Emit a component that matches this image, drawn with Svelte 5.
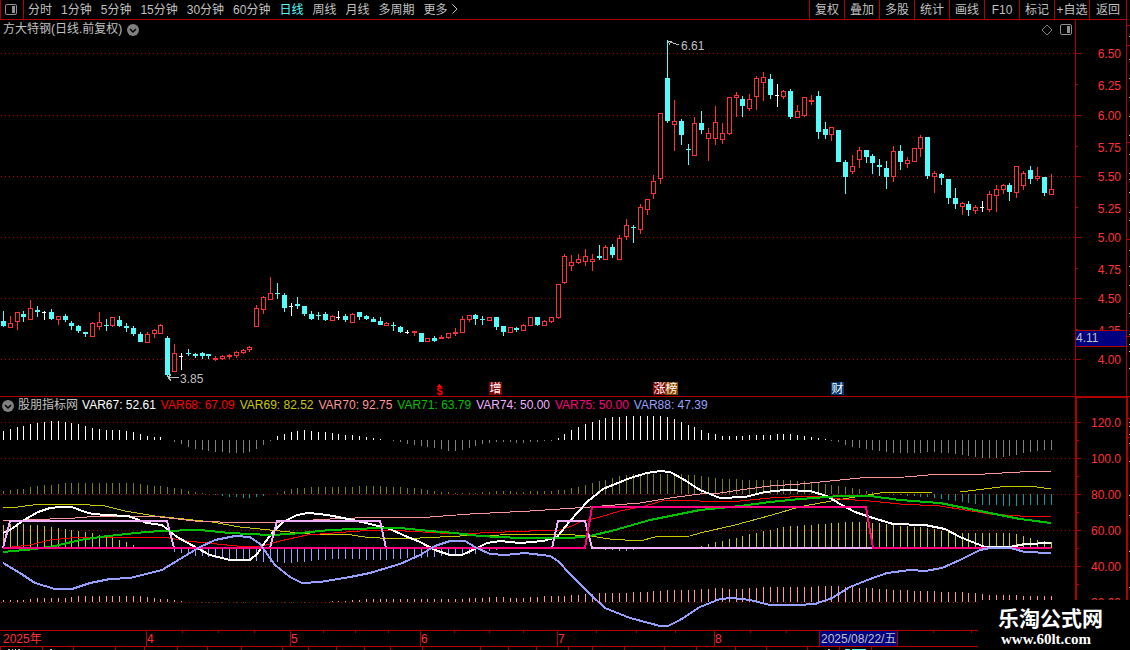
<script lang="ts">
  const periods = ["分时", "1分钟", "5分钟", "15分钟", "30分钟", "60分钟", "日线", "周线", "月线", "多周期", "更多"];
  const tools = ["复权", "叠加", "多股", "统计", "画线", "F10", "标记", "+自选", "返回"];

  let active = $state("日线");

  const legend = [
    { name: "VAR67", value: "52.61", tone: "white" },
    { name: "VAR68", value: "67.09", tone: "red" },
    { name: "VAR69", value: "82.52", tone: "yellow" },
    { name: "VAR70", value: "92.75", tone: "pink" },
    { name: "VAR71", value: "63.79", tone: "green" },
    { name: "VAR74", value: "50.00", tone: "violet" },
    { name: "VAR75", value: "50.00", tone: "magenta" },
    { name: "VAR88", value: "47.39", tone: "blue" }
  ];

  // kind, high, body top, body bottom, low
  // r = hollow up, f = flat up, c = down, w = unchanged
  const raw = `c 311 321 326 327|r 316 323 328 328|r 312 312 322 330|c 311 314 317 322|r 300 308 320 320|c 306 310 312 317|w 311 312 313 320|c 309 312 319 320|r 316 316 320 325|c 314 316 320 322
|c 321 323 326 330|c 325 326 331 333|c 332 332 334 337|r 322 323 337 337|r 312 322 327 330|c 319 325 326 331|r 317 317 326 327|c 316 320 326 327|c 323 326 328 332|c 326 328 334 336
|c 332 334 342 342|r 332 334 343 343|r 329 330 334 338|r 324 325 334 334|c 336 338 375 377|r 344 353 372 372|w 353 356 357 370|c 349 353 354 356|c 353 354 356 358|c 352 353 356 359
|c 354 354 356 359|f 356 358 360 361|r 355 356 359 360|f 354 355 357 359|r 351 352 356 358|r 349 350 353 354|r 346 347 350 352|r 305 308 327 327|r 296 297 310 314|r 277 293 300 300
|c 283 293 294 299|c 293 295 308 312|w 303 306 307 316|c 297 304 306 309|c 306 306 314 316|c 311 314 319 320|c 312 315 316 320|c 312 314 320 321|r 315 316 321 321|w 311 317 318 320
|c 314 316 320 322|r 313 314 323 323|c 312 312 317 320|c 315 316 319 320|c 317 319 322 322|c 317 321 325 325|r 322 323 326 326|c 322 325 326 331|c 326 327 332 333|w 330 332 333 334
|f 331 331 333 336|c 333 333 342 342|r 338 338 342 342|c 336 338 341 342|f 335 337 339 339|r 333 333 338 339|f 328 332 334 336|r 316 319 333 333|r 315 315 320 322|c 314 315 319 325
|c 316 319 320 325|r 317 317 321 321|c 317 317 327 330|c 326 326 332 336|r 327 327 333 333|c 327 328 330 332|r 324 325 331 331|r 317 317 326 326|c 317 317 325 326|r 320 321 326 326
|r 317 317 322 323|r 284 284 318 319|r 254 256 283 284|r 255 262 266 271|r 254 259 263 264|r 249 256 262 266|r 254 259 262 271|c 245 256 258 260|r 245 247 260 260|c 244 247 255 258
|r 235 238 260 260|r 219 225 237 240|c 225 227 228 243|r 204 207 230 234|r 199 199 210 215|r 175 181 194 199|r 113 113 179 184|c 40 78 121 123|r 100 121 125 151|c 119 121 135 145
|c 144 149 150 165|r 117 123 156 156|c 111 123 130 134|r 128 133 139 161|r 106 122 139 145|r 123 133 140 144|r 97 97 134 135|r 92 95 98 117|c 96 99 106 117|r 94 99 109 111
|r 76 78 97 110|r 72 77 83 101|c 74 79 95 99|w 84 95 96 107|r 90 91 97 99|c 89 91 117 119|r 105 111 118 118|r 97 97 116 117|f 95 100 102 105|c 91 96 132 139
|c 122 129 135 139|r 127 127 135 141|c 130 130 162 162|c 160 162 177 194|r 155 166 172 174|r 147 150 160 168|c 150 150 157 163|c 154 156 163 174|c 159 165 167 176|c 161 168 177 189
|r 146 151 177 182|c 145 151 162 170|r 157 160 164 168|r 148 148 162 162|r 135 137 149 157|c 137 137 176 179|r 171 173 177 193|c 173 174 178 185|c 179 179 198 204|c 188 198 204 209
|r 202 203 207 215|c 201 204 210 216|r 205 207 211 214|w 201 207 208 212|r 191 194 210 212|r 185 189 196 212|r 184 185 190 194|c 183 185 192 201|r 166 166 193 198|r 171 173 186 190
|c 166 170 179 184|r 167 176 179 181|c 177 177 193 196|r 174 189 195 195`;

  const barX = (i: number) => Math.floor(3.45 + i * 6.8468);

  const candles = raw.split("|").map((row, i) => {
    const [kind, ...rest] = row.trim().split(" ");
    const [high, top, bottom, low] = rest.map(Number);
    return { kind, high, top, bottom, low, x: barX(i) };
  });

  function parse(text: string) {
    return text.split(" ").map((p) => p.split(",").map(Number));
  }

  function heightAt(points: number[][], x: number) {
    if (x <= points[0][0]) return points[0][1];
    for (let i = 1; i < points.length; i++) {
      const [x0, y0] = points[i - 1];
      const [x1, y1] = points[i];
      if (x <= x1) return y0 + ((y1 - y0) * (x - x0)) / (x1 - x0);
    }
    return points[points.length - 1][1];
  }

  // Histograms: base line, colours above and below it, and x,height key points
  const histograms = [
    {
      base: 440, up: "white", down: "gray",
      points: parse("3,9 10,11 23,14 37,17 44,18 51,19 58,19 65,18 78,16 92,12 106,10 120,10 133,8 140,6 147,4 154,3 160,3 167,0 174,-2 188,-7 201,-10 215,-12 230,-13 243,-13 250,-12 257,-9 263,-5 270,-1 277,4 284,6 297,9 304,10 318,8 332,7 345,5 360,4 373,2 380,1 387,0 400,-2 407,-4 420,-6 434,-8 448,-11 455,-11 461,-10 475,-6 489,-3 500,-2 523,-3 530,-2 550,-1 554,0 558,2 564,6 578,13 592,18 605,22 626,24 660,24 675,21 688,15 701,10 708,7 722,4 735,4 750,5 765,5 783,6 800,5 818,2 825,1 832,-1 838,-2 845,-5 852,-7 866,-9 880,-11 895,-13 910,-13 935,-12 955,-14 970,-16 982,-18 998,-18 1010,-16 1024,-13 1037,-11 1051,-10")
    },
    {
      base: 494, up: "olive", down: "teal",
      points: parse("3,3 10,4 23,5 37,8 51,9 65,11 133,11 147,9 160,8 174,6 188,3 201,1 208,0 215,-1 229,-3 243,-4 250,-4 264,-2 272,0 277,1 284,3 297,6 318,7 345,7 373,8 393,7 414,6 427,4 441,2 455,1 469,1 482,2 500,3 523,2 537,3 551,3 564,4 578,7 592,11 605,14 619,18 633,20 680,20 701,18 722,15 756,14 783,14 805,13 818,11 832,9 845,7 852,6 866,3 880,0 900,-1 921,-3 935,-4 955,-7 970,-9 982,-11 1010,-12 1024,-11 1051,-11")
    },
    {
      base: 548, up: "yellow", down: "blue",
      points: parse("3,23 10,24 37,23 51,21 65,19 78,17 92,15 106,11 119,8 133,3 140,1 150,0 160,0 167,-1 174,-4 188,-7 201,-8 215,-10 243,-12 257,-13 264,-14 290,-15 304,-14 318,-12 345,-11 380,-12 400,-11 414,-10 448,-8 475,-6 489,-3 500,-1 530,-1 540,0 590,0 608,-2 626,-3 641,-1 648,0 690,0 694,1 701,2 708,4 722,7 735,10 750,14 765,17 783,21 811,23 831,25 859,26 880,25 900,22 921,21 935,19 950,15 1010,15 1024,12 1037,8 1051,6")
    },
    {
      base: 602, up: "pink", down: "darkgreen",
      points: parse("3,2 23,2 37,4 65,4 78,6 133,6 147,5 160,3 174,2 181,1 190,0 201,-1 297,-1 320,0 338,1 345,1 359,2 373,3 455,3 475,4 495,5 515,4 551,6 578,7 592,8 605,9 619,9 640,10 675,12 694,12 714,14 735,13 756,14 770,15 797,15 832,16 845,15 866,14 880,13 900,12 921,11 955,10 975,9 989,7 1051,6")
    }
  ];

  const bars = histograms.flatMap((h) =>
    candles.map(({ x }) => {
      const v = Math.round(heightAt(h.points, x));
      return { x, y: v > 0 ? h.base - v : h.base, height: Math.abs(v), tone: v > 0 ? h.up : h.down };
    })
  ).filter((b) => b.height > 0);

  const lines = [
    { tone: "yellow", width: 1, points: "3,507 18,507 40,504 70,504 90,505 105,506 125,511 155,516 212,522 240,527 280,531 310,534 345,534 365,537 380,538 420,538 460,536 500,535 530,534 560,534 590,536 610,539 640,541 655,537 690,536 700,533 735,525 772,515 799,507 820,503 843,499 880,493 933,492 960,492 1000,487 1030,486 1051,489" },
    { tone: "pink", width: 1, points: "3,521 50,519 75,518 100,516 135,516 160,517 195,521 220,522 280,522 330,519 380,517 430,517 470,514 530,511 590,507 640,503 670,498 700,494 720,493 740,490 770,486 800,484 830,481 860,478 905,477 940,474 985,474 1020,472 1051,471" },
    { tone: "red", width: 1, points: "3,548 30,545 50,540 70,538 107,537 163,537 187,541 207,543 237,546 263,546 280,541 307,535 333,533 360,531 380,530 405,531 440,533 480,533 530,531 560,530 572,526 580,522 600,517 620,511 645,506 665,500 700,501 740,501 770,498 810,496 840,499 870,501 900,504 940,506 965,510 990,514 1020,516 1051,517" },
    { tone: "white", width: 2, points: "3,533 10,530 24,520 38,512 50,508 60,507 72,507 85,512 93,514 106,515 128,516 147,523 162,525 177,537 197,548 210,555 230,560 250,560 258,553 263,545 273,532 283,522 297,515 308,513 320,514 333,516 353,520 370,524 390,529 403,535 420,542 435,550 450,555 462,555 477,548 487,543 500,541 520,543 543,541 557,537 570,521 587,502 603,489 630,478 647,473 660,471 670,472 683,479 700,490 720,498 745,497 765,492 785,490 810,491 827,496 840,504 855,512 870,517 893,524 925,525 945,529 960,537 985,547 1010,547 1025,544 1051,543" },
    { tone: "green", width: 2, points: "3,552 35,549 55,546 80,540 100,537 135,533 160,531 200,530 230,533 270,535 290,534 330,530 380,528 400,528 430,531 455,533 480,536 520,538 570,538 590,536 615,530 650,520 680,514 700,510 740,506 770,502 800,499 840,496 870,496 900,500 940,503 965,508 1000,515 1020,519 1051,523" },
    { tone: "violet", width: 2, points: "3,548 10,521 167,521 174,548 270,548 277,521 380,521 386,548 552,548 558,521 585,521 592,548 873,548" },
    { tone: "magenta", width: 2, points: "3,548 585,548 592,507 866,507 873,548 1051,548" },
    { tone: "blue", width: 2, points: "3,563 20,573 35,583 55,589 72,589 90,583 110,579 130,578 150,573 162,570 180,559 200,547 215,540 235,536 250,537 260,544 275,565 290,577 302,583 320,582 350,577 370,573 400,564 420,555 435,546 450,541 465,541 475,547 490,554 505,555 525,553 550,556 558,561 570,574 590,594 605,608 630,618 660,626 668,626 680,620 700,607 720,599 733,598 750,600 770,605 797,605 815,604 832,598 850,587 870,579 887,573 910,570 925,571 942,568 960,560 980,550 990,548 1010,548 1025,552 1051,553" }
  ];

  const prices = [
    { label: "6.50", y: 53 }, { label: "6.25", y: 84 }, { label: "6.00", y: 115 }, { label: "5.75", y: 146 },
    { label: "5.50", y: 176 }, { label: "5.25", y: 207 }, { label: "5.00", y: 237 }, { label: "4.75", y: 268 },
    { label: "4.50", y: 298 }, { label: "4.25", y: 329 }, { label: "4.00", y: 359 }
  ];

  const levels = ["120.0", "100.0", "80.00", "60.00", "40.00", "20.00"].map((label, i) => ({ label, y: 422 + i * 36 }));

  const events = [
    { text: "增", x: 489, fill: "#800000" },
    { text: "涨", x: 653, fill: "#800000" },
    { text: "榜", x: 665, fill: "#8a4400" },
    { text: "财", x: 831, fill: "#003a70" }
  ];

  const months = [{ label: "4", x: 146 }, { label: "5", x: 290 }, { label: "6", x: 420 }, { label: "7", x: 557 }, { label: "8", x: 714 }];
  const weeks = [182, 218, 254, 323, 355, 388, 454, 489, 523, 596, 636, 675, 750, 786, 933, 971];
  const footTicks = [0, 42, 73, 115, 144, 177, 207, 241, 282, 308, 336, 364, 390, 422, 480, 508, 536, 568, 592, 624, 664, 696, 735, 766, 807, 839, 871];
  const priceDots = [36, 59, 78, 97, 116, 135, 154, 173, 179, 192, 212, 220, 250, 266, 285, 313, 334, 344, 351, 368];
  const sideDots = [422, 426, 434, 443, 461, 495, 515, 551, 587];
</script>

{#snippet chevron()}
  <svg class="chevron" viewBox="0 0 12 12" aria-hidden="true">
    <circle cx="6" cy="6" r="6" fill="#808080" />
    <path d="M3 5l3 3 3-3" fill="none" stroke="#000" stroke-width="1.5" />
  </svg>
{/snippet}

{#snippet panel()}
  <svg class="panel" viewBox="0 0 12 12" aria-hidden="true">
    <rect x="0.5" y="0.5" width="11" height="10" rx="1.5" fill="none" stroke="#909090" />
    <rect x="7" y="2" width="3" height="7" fill="#909090" />
  </svg>
{/snippet}

<main>
  <header>
    <button class="toggle" aria-label="侧栏">{@render panel()}</button>
    <nav class="periods">
      {#each periods as period}
        <button class:active={active === period} onclick={() => (active = period)}>
          {period}{#if period === "更多"}<svg class="more" viewBox="0 0 6 10" aria-hidden="true"><path d="M0.5 0.5L5 5 0.5 9.5" /></svg>{/if}
        </button>
      {/each}
    </nav>
    <nav class="tools">
      {#each tools as tool}
        <button>{tool}</button>
      {/each}
    </nav>
  </header>

  <section class="pane">
    <div class="caption">
      <h1>方大特钢(日线.前复权)</h1>
      {@render chevron()}
      <div class="corner">
        <svg class="diamond" viewBox="0 0 12 12" aria-hidden="true"><path d="M6 1l5 5-5 5-5-5z" /></svg>
        {@render panel()}
      </div>
    </div>

    <svg class="chart" viewBox="0 20 1130 376" role="img" aria-label="日线">
      {#each prices as price, i}
        {#if i % 2 === 0}
          <line class="grid" x1="1" x2="1075" y1={price.y + 0.5} y2={price.y + 0.5} />
        {/if}
        <rect class="rule" x="1076" y={price.y} width={i % 2 ? 2 : 5} height="1" />
        <text class="scale" x="1121" y={price.y + (i % 2 ? 6 : 5)}>{price.label}</text>
      {/each}

      {#each candles as c}
        <g class={c.kind}>
          {#if c.kind === "r"}
            <rect x={c.x} y={c.high} width="1" height={c.top - c.high} />
            <rect x={c.x} y={c.bottom} width="1" height={c.low - c.bottom} />
            <rect class="hollow" x={c.x - 1.5} y={c.top + 0.5} width="4" height={c.bottom - c.top - 1} />
          {:else}
            <rect x={c.x} y={c.high} width="1" height={c.low - c.high} />
            <rect x={c.x - 2} y={c.top} width={c.kind === "w" ? 4 : 5} height={c.bottom - c.top} />
          {/if}
        </g>
      {/each}

      <path class="arrow" d="M668 41.5L679 45M668 41.5h4M668 41.5l2 3" />
      <text class="note" x="681" y="50">6.61</text>
      <path class="arrow" d="M168 377.5h11M168 377.5l3-3M168 377.5l3 3" />
      <text class="note" x="180" y="383">3.85</text>

      <path d="M436.5 387l3-3 3 3z" fill="#f00" />
      <text class="dividend" x="439.5" y="395">$</text>
      {#each events as event}
        <rect x={event.x} y="382" width="13" height="13" fill={event.fill} />
        <text class="event" x={event.x + 0.5} y="393">{event.text}</text>
      {/each}

      <rect class="rule" x="1075" y="20" width="1" height="376" />
      <rect class="rule" x="1126" y="20" width="1" height="376" />
      {#each [25, 45, 142, 239, 336] as y}
        <rect class="rule" x="1127" {y} width="3" height="1" />
      {/each}
      {#each priceDots as y}
        <rect x="1129" {y} width="1" height="1" fill="#c0c0c0" />
      {/each}

      <rect class="cursor" x="1075.5" y="330.5" width="51" height="16" />
      <text class="note" x="1076" y="342">4.11</text>
    </svg>
  </section>

  <section class="pane">
    <div class="caption legend">
      {@render chevron()}
      <h2>股朋指标网</h2>
      <ul>
        {#each legend as item}
          <li class={item.tone}>{item.name}: {item.value}</li>
        {/each}
      </ul>
    </div>

    <svg class="chart" viewBox="0 396 1130 254" role="img" aria-label="股朋指标网">
      {#each levels as level}
        <line class="grid" x1="1" x2="1075" y1={level.y + 0.5} y2={level.y + 0.5} />
        <rect class="rule" x="1077" y={level.y} width="4" height="1" />
        <rect class="rule" x="1077" y={level.y + 18} width="2" height="1" />
        <text class="scale" x="1121" y={level.y + 5}>{level.label}</text>
      {/each}

      {#each bars as bar}
        <rect class={bar.tone} x={bar.x} y={bar.y} width="1" height={bar.height} />
      {/each}
      {#each lines as line}
        <polyline class={line.tone} points={line.points} stroke-width={line.width} />
      {/each}

      <rect class="rule" x="0" y="396" width="1130" height="1" />
      <rect class="rule" x="1075" y="396" width="53" height="2" />
      <rect class="rule" x="1075" y="396" width="2" height="234" />
      <rect class="rule" x="1126" y="396" width="2" height="234" />
      <rect class="rule" x="1128" y="418" width="2" height="1" />
      <rect class="rule" x="1128" y="437" width="2" height="1" />
      {#each sideDots as y}
        <rect x="1129" {y} width="1" height="1" fill="#c0c0c0" />
      {/each}

      <rect class="rule" x="0" y="630" width="1130" height="1" />
      <rect class="rule" x="0" y="646" width="1130" height="1" />
      <text class="month" x="3" y="643">2025年</text>
      {#each months as month}
        <rect class="rule" x={month.x} y="630" width="1" height="16" />
        <text class="month" x={month.x + 1} y="643">{month.label}</text>
      {/each}
      {#each weeks as x}
        <rect class="rule" {x} y="631" width="1" height="2" />
      {/each}
      {#each footTicks as x}
        <rect class="rule" {x} y="647" width="1" height="3" />
      {/each}
      <path class="arrow" d="M8 649.5h2M12 649.5h1M15 649.5h1M18 649.5h2M50 649.5h2M828 649.5h2" />
      <path d="M845 649h5v1h-5zM852 649h14v1h-14z" fill="#54fcfc" />
      <rect class="cursor" x="819.5" y="630.5" width="78" height="16" />
      <text class="note" x="821" y="643">2025/08/22/五</text>
    </svg>

    <a class="brand" href="http://www.60lt.com">
      <strong>乐淘公式网</strong>
      <span>www.60lt.com</span>
    </a>
  </section>
</main>

<style>
  :global(body) {
    background: #000;
  }

  main {
    background: #000;
    color: #c0c0c0;
    font: 12px/19px "Liberation Sans", "Noto Sans CJK SC", sans-serif;
    overflow: hidden;
  }

  button {
    padding: 0;
    border: 0;
    background: none;
    color: inherit;
    font: inherit;
    white-space: nowrap;
    cursor: pointer;
  }

  header {
    display: flex;
    height: 19px;
    margin-right: 3px;
    border-right: 1px solid #b00000;
    border-bottom: 1px solid #b00000;
  }

  .toggle {
    display: flex;
    align-items: center;
    width: 24px;
    padding-left: 4px;
    box-sizing: border-box;
    border-left: 1px solid #b00000;
    border-right: 1px solid #b00000;
  }

  .panel,
  .chevron,
  .diamond {
    width: 12px;
    height: 12px;
    flex: none;
  }

  .periods {
    display: flex;
    flex: 1;
    gap: 9px;
    padding-left: 4px;
  }

  .periods button,
  .tools button {
    padding-top: 1px;
  }

  .periods .active {
    color: #54fcfc;
  }

  .more {
    width: 6px;
    height: 10px;
    margin-left: 4px;
    fill: none;
    stroke: #c0c0c0;
  }

  .tools {
    display: flex;
  }

  .tools button {
    width: 35px;
    border-left: 1px solid #b00000;
  }

  .tools button:last-child {
    width: 37px;
  }

  .pane {
    position: relative;
  }

  /* Captions sit over the top edge of their chart */
  .caption {
    position: absolute;
    top: 0;
    left: 0;
    right: 0;
    display: flex;
    align-items: center;
    gap: 5px;
    padding-left: 3px;
  }

  h1,
  h2 {
    margin: 0;
    font: inherit;
  }

  .corner {
    display: flex;
    gap: 7px;
    margin-left: auto;
    margin-right: 58px;
  }

  .diamond {
    fill: none;
    stroke: #808080;
  }

  .legend {
    padding-left: 2px;
    gap: 4px;
  }

  .legend ul {
    display: flex;
    gap: 5px;
    margin: 0;
    padding: 0;
    list-style: none;
    white-space: nowrap;
  }

  .chart {
    display: block;
    width: 100%;
    height: auto;
    shape-rendering: crispEdges;
  }

  .grid {
    stroke: #b00000;
    stroke-dasharray: 1 3;
  }

  .rule {
    fill: #b00000;
  }

  .scale {
    fill: #ff3232;
    text-anchor: end;
  }

  .month {
    fill: #ff3232;
  }

  .note {
    fill: #c0c0c0;
  }

  .arrow {
    fill: none;
    stroke: #c0c0c0;
  }

  .event {
    fill: #fff;
  }

  .dividend {
    fill: #f00;
    font-size: 11px;
    font-weight: bold;
    text-anchor: middle;
  }

  .cursor {
    fill: #000080;
    stroke: #b00000;
  }

  .r,
  .f {
    fill: #ff3232;
  }

  .c {
    fill: #54fcfc;
  }

  .w {
    fill: #fff;
  }

  .hollow {
    fill: #000;
    stroke: #ff3232;
  }

  /* Series colours, shared by legend, bars and lines */
  .white { --tone: #fff; }
  .gray { --tone: #808080; }
  .red { --tone: #f00; }
  .yellow { --tone: #c8c800; }
  .olive { --tone: #808000; }
  .teal { --tone: #00a0a0; }
  .pink { --tone: #ff9696; }
  .green { --tone: #00c000; }
  .darkgreen { --tone: #006000; }
  .violet { --tone: #f0b0ff; }
  .magenta { --tone: #ff0080; }
  .blue { --tone: #96a0ff; }

  li {
    color: var(--tone);
  }

  rect[class] {
    fill: var(--tone);
  }

  rect.rule {
    fill: #b00000;
  }

  rect.cursor {
    fill: #000080;
  }

  rect.hollow {
    fill: #000;
  }

  polyline {
    fill: none;
    stroke: var(--tone);
    stroke-linejoin: round;
  }

  .brand {
    position: absolute;
    right: 0;
    bottom: 0;
    display: flex;
    flex-direction: column;
    width: 152px;
    height: 50px;
    padding: 7px 28px 0 20px;
    box-sizing: border-box;
    background: #000;
    color: #fff;
    text-decoration: none;
  }

  .brand strong {
    font-size: 21px;
    line-height: 24px;
    white-space: nowrap;
  }

  .brand span {
    padding-left: 3px;
    font: bold 15px/16px "Liberation Serif", serif;
  }
</style>
